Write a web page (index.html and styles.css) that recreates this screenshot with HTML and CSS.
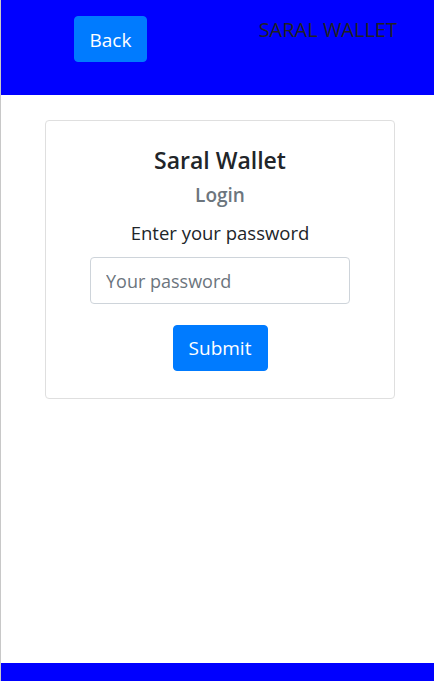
FILE: index.html
```html
<!DOCTYPE html>
<html>
<head>
<meta charset="utf-8">
<link rel="stylesheet" href="styles.css">
</head>
<body>
<div class="page">
  <header class="topbar">
    <button class="btn btn-back">Back</button>
    <div class="brand">SARAL WALLET</div>
  </header>
  <main class="main">
    <div class="card">
      <h2 class="card-title">Saral Wallet</h2>
      <h3 class="card-sub">Login</h3>
      <p class="prompt">Enter your password</p>
      <input class="input" type="password" placeholder="Your password">
      <button class="btn btn-submit">Submit</button>
    </div>
  </main>
  <footer class="footer"></footer>
</div>
</body>
</html>
```
FILE: styles.css
```css
html, body {
  margin: 0;
  padding: 0;
  background: #fff;
}
body {
  font-family: "Open Sans", "Noto Sans", sans-serif;
  color: #212529;
}
.page {
  border-left: 1px solid #c8c8c8;
  min-height: 681px;
  box-sizing: border-box;
  display: flex;
  flex-direction: column;
}
.topbar {
  height: 95px;
  background: #0000ff;
  display: flex;
  justify-content: space-between;
  align-items: flex-start;
  padding: 16px 37px 0 73px;
  box-sizing: border-box;
}
.btn {
  font-family: inherit;
  background: #007bff;
  color: #fff;
  border: 1px solid #007bff;
  border-radius: 4px;
  font-size: 19px;
  line-height: 44px;
  padding: 0 15px;
  cursor: pointer;
}
.btn-back {
  width: 73px;
  height: 46px;
  padding: 0;
  line-height: 46px;
}
.brand {
  margin-top: 2px;
  font-size: 20px;
  line-height: 24px;
  color: #222;
}
.main {
  flex: 1;
}
.card {
  margin: 25px 0 0 44px;
  width: 350px;
  height: 279px;
  box-sizing: border-box;
  border: 1px solid #dfdfdf;
  border-radius: 4px;
  display: flex;
  flex-direction: column;
  align-items: center;
  padding-top: 24px;
}
.card-title {
  margin: 0;
  font-size: 23px;
  font-weight: 600;
  line-height: 30px;
}
.card-sub {
  margin: 8px 0 0;
  font-size: 19px;
  font-weight: 600;
  line-height: 24px;
  color: #6c757d;
}
.prompt {
  margin: 13px 0 0;
  font-size: 18.5px;
  line-height: 26px;
}
.input {
  margin-top: 11px;
  width: 260px;
  height: 47px;
  box-sizing: border-box;
  border: 1px solid #ced4da;
  border-radius: 4px;
  padding: 0 15px;
  font-family: inherit;
  font-size: 18px;
  color: #495057;
}
.input::placeholder {
  color: #6c757d;
}
.btn-submit {
  margin-top: 21px;
  width: 95px;
  height: 46px;
  padding: 0;
}
.footer {
  height: 18px;
  background: #0000ff;
}
```
